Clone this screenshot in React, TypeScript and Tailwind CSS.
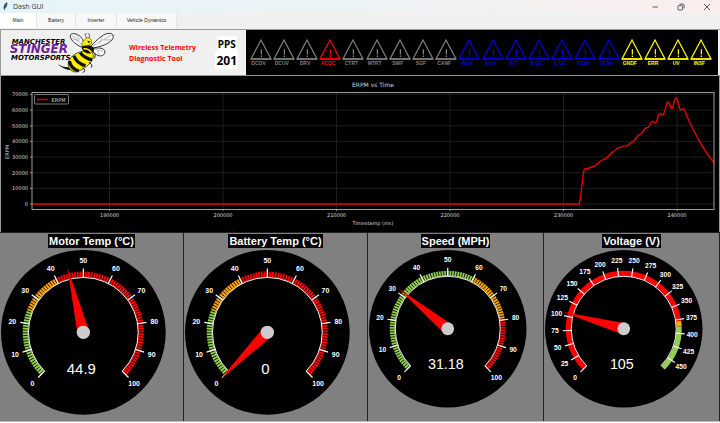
import React from "react";

type Zone = { to: number; color: string };

const GREEN = "#92d050";
const ORANGE = "#ffa500";
const RED = "#ff0000";

const point = (r: number, deg: number): [number, number] => {
  const a = (deg * Math.PI) / 180;
  return [r * Math.cos(a), -r * Math.sin(a)];
};

const arc = (r: number, from: number, to: number) => {
  const [x1, y1] = point(r, from);
  const [x2, y2] = point(r, to);
  return `M${x1} ${y1}A${r} ${r} 0 ${from - to > 180 ? 1 : 0} 1 ${x2} ${y2}`;
};

type GaugeProps = {
  title: string;
  value: number;
  max: number;
  step: number;
  last: number;
  zones: Zone[];
  minor?: boolean;
};

function Gauge({ title, value, max, step, last, zones, minor }: GaugeProps) {
  const angle = (v: number) => 225 - (v / max) * 270;
  const majors: number[] = [];
  for (let v = 0; v <= last; v += step) majors.push(v);
  const minors = minor ? Array.from({ length: 100 }, (_, i) => i + 0.5) : [];
  const needle = angle(value);
  const tip = point(67, needle);
  const a = point(6, needle + 90);
  const b = point(6, needle - 90);

  return (
    <section className="flex min-w-0 flex-col border-t border-r border-[#222] bg-[#808080] pt-px">
      <h2 className="self-center bg-black px-px text-[11px] leading-[14px] font-bold text-white">{title}</h2>
      <svg viewBox="-82.5 -82.5 165 165" className="mt-0.5 ml-px block w-[90%]" role="img" aria-label={`${title} ${value}`}>
        <circle r="82.5" fill="#000" />
        {zones.map((z, i) => (
          <path
            key={z.to}
            d={arc(58, angle(i ? zones[i - 1].to : 0), angle(z.to))}
            fill="none"
            stroke={z.color}
            strokeWidth="5.5"
          />
        ))}
        {minors.map((v) => {
          const [x1, y1] = point(56, angle(v));
          const [x2, y2] = point(61, angle(v));
          return <line key={v} x1={x1} y1={y1} x2={x2} y2={y2} stroke="#000" strokeWidth="0.9" />;
        })}
        <path d={arc(55, 225, -45)} fill="none" stroke="#f4f4f4" strokeWidth="1" />
        {majors.map((v) => {
          const [x1, y1] = point(55, angle(v));
          const [x2, y2] = point(64, angle(v));
          const [tx, ty] = point(72, angle(v));
          return (
            <g key={v}>
              <line x1={x1} y1={y1} x2={x2} y2={y2} stroke="#fff" strokeWidth="1.2" />
              <text x={tx} y={ty + 2.5} textAnchor="middle" fontSize="7" fontWeight="bold" fill="#fff">
                {v}
              </text>
            </g>
          );
        })}
        <text x="-2" y="42" textAnchor="middle" fontSize="15" fill="#fff">
          {value}
        </text>
        <polygon points={`${tip} ${a} ${b}`} fill="#f00" />
        <circle r="6.7" fill="#ccc" />
      </svg>
    </section>
  );
}

const FAULTS: { group: string; className: string; names: string[] }[] = [
  { group: "a", className: "text-[#808080]", names: ["DCOV", "DCUV", "DRV"] },
  { group: "b", className: "text-[#ff0000]", names: ["ACOC"] },
  { group: "c", className: "text-[#808080]", names: ["CTRT", "MTRT", "SWF", "SGF", "CANF"] },
  { group: "d", className: "text-[#0000e0]", names: ["BOV", "BUV", "B T", "D OC", "C OC", "COM", "LEAK"] },
  { group: "e", className: "text-[#ffff00]", names: ["GNDF", "ERR", "UV", "INSF"] },
];

function Warning({ name, className }: { name: string; className: string }) {
  return (
    <li className={`flex min-w-0 flex-col items-center ${className}`}>
      <svg viewBox="0 0 22 21" className="h-[21px] w-[22px]" fill="none" stroke="currentColor">
        <path d="M11 1L21 20H1Z" strokeWidth="1.2" />
        <path d="M1 20H21" strokeWidth="1.6" />
        <path d="M11.4 10.3V15.4M11.4 16.6V18" strokeWidth="1.3" />
      </svg>
      <span className="pr-1 text-[5px] leading-[7px] font-bold whitespace-nowrap">{name}</span>
    </li>
  );
}

const TRACE: [number, number][] = [
  [579, 128], [580, 126], [583.5, 96], [584.5, 92.5], [587, 93], [590, 91.5], [595, 90], [600, 85.5], [603, 83.5],
  [606.5, 82.5], [611.5, 76.5], [614, 75.5], [617.5, 71.7], [620, 71.9], [624, 69.6], [627.5, 70.2], [631, 66.4],
  [634, 65.4], [638, 58.8], [641.3, 58.2], [645.3, 51.5], [648.3, 52], [651.6, 45.4], [653.6, 45.4], [655.3, 47.6],
  [657, 45], [658.7, 37.6], [660.3, 37.2], [663, 40.2], [665, 34.5], [666.8, 27], [668.2, 25.8], [669.5, 28],
  [671.6, 33.4], [673, 31], [674.7, 23], [676.4, 21.6], [677.6, 23.5], [679.3, 32], [680.6, 34.4], [683.2, 32.3],
  [684.7, 34], [687.3, 41.3], [691.7, 50.7], [698.3, 63.3], [705.7, 76], [714, 86.7],
];

const tracePath = () => {
  let d = "M32 128L579 128";
  for (let i = 0; i < TRACE.length - 1; i++) {
    const [x, y] = TRACE[i];
    const [nx, ny] = TRACE[i + 1];
    d += `Q${x} ${y} ${(x + nx) / 2} ${(y + ny) / 2}`;
  }
  return d + "L714 86.7";
};

function Chart() {
  const rows = [0, 10000, 20000, 30000, 40000, 50000, 60000, 70000];
  const cols = [190000, 200000, 210000, 220000, 230000, 240000];
  return (
    <svg
      viewBox="0 0 718 156"
      className="block w-full bg-black font-['DejaVu_Sans',sans-serif]"
      fill="#d8d8d8"
      fontSize="5"
      role="img"
      aria-label="ERPM vs Time"
    >
      <text x="372" y="11" textAnchor="middle" fontSize="6">ERPM vs Time</text>
      {rows.map((v) => {
        const y = 128 - (v / 10000) * 15.65;
        return (
          <g key={v}>
            <line x1="31" x2="713" y1={y} y2={y} stroke="#1e1e1e" strokeWidth="1" />
            <line x1="29" x2="31" y1={y} y2={y} stroke="#ccc" strokeWidth="0.7" />
            <text x="27" y={y + 2} textAnchor="end">{v}</text>
          </g>
        );
      })}
      {cols.map((v) => {
        const x = 108.5 + ((v - 190000) / 10000) * 113.5;
        return (
          <g key={v}>
            <line x1={x} x2={x} y1="16" y2="133" stroke="#1e1e1e" strokeWidth="1" />
            <line x1={x} x2={x} y1="133" y2="135" stroke="#ccc" strokeWidth="0.7" />
            <text x={x} y="141" textAnchor="middle">{v}</text>
          </g>
        );
      })}
      <path d={tracePath()} transform="translate(-1 0)" fill="none" stroke="#e60000" strokeWidth="1.4" />
      <rect x="31" y="16.5" width="682" height="117" fill="none" stroke="#b0b0b0" strokeWidth="0.9" />
      <rect x="33.5" y="18.5" width="34" height="9.5" rx="1" fill="#000" stroke="#999" strokeWidth="0.8" />
      <line x1="36" x2="47" y1="23.5" y2="23.5" stroke="#d00000" strokeWidth="1.5" />
      <text x="50.5" y="25.5">ERPM</text>
      <text x="372" y="149" textAnchor="middle">Timestamp (ms)</text>
      <text transform="translate(8 76) rotate(-90)" textAnchor="middle">ERPM</text>
    </svg>
  );
}

function Logo() {
  return (
    <svg viewBox="20 5 330 130" className="ml-1.5 h-[43px] w-[110px] shrink-0" role="img" aria-label="Manchester Stinger Motorsports">
      <g fontFamily="'DejaVu Sans', sans-serif" fontWeight="bold" fontStyle="italic">
        <text x="33" y="43" fontSize="21" fill="#000">MANCHESTER</text>
        <text x="27" y="73" fontSize="36" fill="#6b2496">STINGER</text>
        <text x="31" y="93" fontSize="21" fill="#000">MOTORSPORTS</text>
      </g>
      <g fill="#fafafa" fillOpacity="0.85" stroke="#111" strokeWidth="2.5">
        <path d="M250 56C232 50 210 34 210 20C211 8 232 12 243 24C250 32 252 44 250 56Z" />
        <path d="M270 54C282 40 306 14 326 12C344 11 343 27 332 36C318 48 294 54 270 58Z" />
        <path d="M272 58C290 56 308 54 314 64C318 75 306 82 298 80C286 77 278 68 272 62Z" />
      </g>
      <path
        d="M216 18C228 30 240 38 248 50M213 28L236 34M228 15L238 32M276 52C296 40 318 26 334 18M300 40L306 24M312 32L334 32M282 60L308 66M292 64L298 76"
        fill="none"
        stroke="#777"
        strokeWidth="1.5"
      />
      <path d="M172 105C184 116 196 122 210 123L224 128L220 112C200 118 186 114 172 105Z" fill="#111" />
      <path d="M250 66C222 70 203 88 204 108C206 124 222 134 236 126C256 118 278 100 280 80C280 68 264 62 250 66Z" fill="#ffee00" stroke="#111" strokeWidth="2" />
      <g fill="none" stroke="#111" strokeWidth="10">
        <path d="M240 70C246 80 262 90 276 92" />
        <path d="M221 80C226 94 240 106 256 110" />
        <path d="M207 96C210 110 222 122 236 126" />
      </g>
      <path d="M246 49C258 44 276 48 281 57C285 67 274 76 260 72C249 69 242 58 246 49Z" fill="#111" />
      <path d="M250 59C260 57 268 62 274 70" fill="none" stroke="#ffee00" strokeWidth="5" />
      <path d="M245 52C244 40 252 30 262 25C272 24 276 34 274 43C270 51 256 48 245 52Z" fill="#ffee00" stroke="#444" strokeWidth="2" />
      <path d="M262 34L272 38L264 41Z" fill="#111" />
      <path d="M259 26L254 15L260 13M267 26L269 15L263 13" fill="none" stroke="#333" strokeWidth="2" />
      <path d="M276 66C286 72 288 80 282 88M266 100C276 104 278 112 272 116M246 116C256 120 256 128 248 130" fill="none" stroke="#111" strokeWidth="3" />
    </svg>
  );
}

const WIN_BUTTON = "flex h-[13px] w-[26px] items-center justify-center text-[#333]";

export default function App() {
  return (
    <div className="flex w-full flex-col bg-[#f0f0f0] font-['Liberation_Sans',Arial,sans-serif]">
      <header className="flex h-[13px] items-center justify-between bg-linear-to-r from-[#e6f4f7] via-[#edf3f5] to-[#fbeeed]">
        <div className="flex items-center gap-[5px] pl-[3px]">
          <svg viewBox="0 0 6 10" className="h-[9px] w-[5px]">
            <path d="M5 0C6 3 4 7 2 8L1.5 10L1 8C0 5 2 1 5 0Z" fill="#244a6e" />
            <path d="M4 2L1.5 10" stroke="#7aa7cc" strokeWidth="0.5" />
          </svg>
          <span className="font-['Open_Sans',sans-serif] text-[7px] leading-[13px] text-[#333]">Dash GUI</span>
        </div>
        <div className="flex">
          <button aria-label="Minimize" className={WIN_BUTTON}>
            <svg viewBox="0 0 8 8" className="size-2" stroke="currentColor" strokeWidth="0.8"><path d="M1.5 4H7" /></svg>
          </button>
          <button aria-label="Restore" className={WIN_BUTTON}>
            <svg viewBox="0 0 8 8" className="size-2" fill="none" stroke="currentColor" strokeWidth="0.8">
              <rect x="1" y="2.5" width="4.5" height="4.5" rx="0.8" />
              <path d="M2.5 1H6Q7 1 7 2V5.5" />
            </svg>
          </button>
          <button aria-label="Close" className={WIN_BUTTON}>
            <svg viewBox="0 0 8 8" className="size-2" stroke="currentColor" strokeWidth="0.8"><path d="M1 1L7 7M7 1L1 7" /></svg>
          </button>
        </div>
      </header>

      <nav role="tablist" className="flex h-4 pb-px text-[5px] leading-[15px] text-[#222]">
        <button role="tab" aria-selected="true" className="w-[37px] border-r border-[#e4e4e4] bg-white">Main</button>
        <button role="tab" aria-selected="false" className="w-[39px] border-r border-[#e4e4e4] bg-[#f8f8f8]">Battery</button>
        <button role="tab" aria-selected="false" className="w-[41px] border-r border-[#e4e4e4] bg-[#f8f8f8]">Inverter</button>
        <button role="tab" aria-selected="false" className="w-[60px] border-r border-[#e4e4e4] bg-[#f8f8f8]">Vehicle Dynamics</button>
      </nav>

      <div className="flex h-[47px] border-y border-[#999] pr-[2px]">
        <div className="flex w-[246px] shrink-0 items-center border-l border-[#999]">
          <Logo />
          <p className="ml-3 flex-1 font-['Open_Sans',sans-serif] text-[7px] leading-[11px] font-bold whitespace-nowrap text-[#ff0000]">
            Wireless Telemetry
            <br />
            Diagnostic Tool
          </p>
          <div className="mr-2 flex flex-col items-center font-['Noto_Sans',sans-serif] font-bold text-black">
            <span className="bg-white px-px text-[10px] leading-[16px]">PPS</span>
            <span className="bg-white px-px text-[12px] leading-[17px]">201</span>
          </div>
        </div>
        <ul className="grid min-w-0 flex-1 grid-cols-20 bg-black pt-[9px] pr-[5px] pl-[3px]">
          {FAULTS.flatMap((f) => f.names.map((n) => <Warning key={n} name={n} className={f.className} />))}
        </ul>
      </div>

      <main>
        <div className="border-x border-[#999]">
          <Chart />
        </div>
        <div className="grid h-[190px] grid-cols-[184fr_184fr_176fr_176fr] border-b border-[#bbb] bg-[#808080]">
          <Gauge title="Motor Temp (°C)" value={44.9} max={100} step={10} last={100} minor
            zones={[{ to: 25, color: GREEN }, { to: 40, color: ORANGE }, { to: 100, color: RED }]} />
          <Gauge title="Battery Temp (°C)" value={0} max={100} step={10} last={100} minor
            zones={[{ to: 25, color: GREEN }, { to: 40, color: ORANGE }, { to: 100, color: RED }]} />
          <Gauge title="Speed (MPH)" value={31.18} max={100} step={10} last={100} minor
            zones={[{ to: 60, color: GREEN }, { to: 80, color: ORANGE }, { to: 100, color: RED }]} />
          <Gauge title="Voltage (V)" value={105} max={470} step={25} last={450}
            zones={[{ to: 378, color: RED }, { to: 388, color: ORANGE }, { to: 470, color: GREEN }]} />
        </div>
      </main>
    </div>
  );
}
